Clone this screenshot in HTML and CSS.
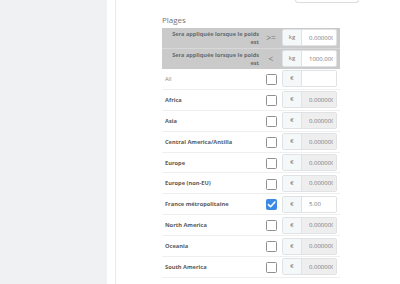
FILE: index.html
```html
<!DOCTYPE html>
<html lang="fr">
<head>
    <meta charset="UTF-8">
    <title>Plages</title>
    <link rel="stylesheet" href="styles.css">
</head>
<body>
    <div class="sidebar"></div>
    <div class="main">
        <div class="card">
            <div class="topbox"></div>
            <h3 class="section-title">Plages</h3>
            <div class="ranges">
                <div class="row head">
                    <div class="cond">Sera appliquée lorsque le poids est</div>
                    <div class="sign">&gt;=</div>
                    <div class="group"><span class="addon">kg</span><input class="val" value="0.000000"></div>
                </div>
                <div class="row head">
                    <div class="cond">Sera appliquée lorsque le poids est</div>
                    <div class="sign">&lt;</div>
                    <div class="group"><span class="addon">kg</span><input class="val" value="1000.000000"></div>
                </div>
                <div class="row zone">
                    <div class="name all">All</div>
                    <div class="sign"><span class="check"></span></div>
                    <div class="group"><span class="addon">€</span><input class="val" value=""></div>
                </div>
                <div class="row zone">
                    <div class="name">Africa</div>
                    <div class="sign"><span class="check"></span></div>
                    <div class="group"><span class="addon">€</span><input class="val" value="0.000000" disabled></div>
                </div>
                <div class="row zone">
                    <div class="name">Asia</div>
                    <div class="sign"><span class="check"></span></div>
                    <div class="group"><span class="addon">€</span><input class="val" value="0.000000" disabled></div>
                </div>
                <div class="row zone">
                    <div class="name">Central America/Antilla</div>
                    <div class="sign"><span class="check"></span></div>
                    <div class="group"><span class="addon">€</span><input class="val" value="0.000000" disabled></div>
                </div>
                <div class="row zone">
                    <div class="name">Europe</div>
                    <div class="sign"><span class="check"></span></div>
                    <div class="group"><span class="addon">€</span><input class="val" value="0.000000" disabled></div>
                </div>
                <div class="row zone">
                    <div class="name">Europe (non-EU)</div>
                    <div class="sign"><span class="check"></span></div>
                    <div class="group"><span class="addon">€</span><input class="val" value="0.000000" disabled></div>
                </div>
                <div class="row zone">
                    <div class="name">France métropolitaine</div>
                    <div class="sign">
                        <span class="check on">
                            <svg viewBox="0 0 12 12" width="11" height="11"><path d="M2.6 6.2 L5 8.5 L9.6 3.4" fill="none" stroke="#fff" stroke-width="1.7" stroke-linecap="round" stroke-linejoin="round"/></svg>
                        </span>
                    </div>
                    <div class="group"><span class="addon">€</span><input class="val" value="5.00"></div>
                </div>
                <div class="row zone">
                    <div class="name">North America</div>
                    <div class="sign"><span class="check"></span></div>
                    <div class="group"><span class="addon">€</span><input class="val" value="0.000000" disabled></div>
                </div>
                <div class="row zone">
                    <div class="name">Oceania</div>
                    <div class="sign"><span class="check"></span></div>
                    <div class="group"><span class="addon">€</span><input class="val" value="0.000000" disabled></div>
                </div>
                <div class="row zone">
                    <div class="name">South America</div>
                    <div class="sign"><span class="check"></span></div>
                    <div class="group"><span class="addon">€</span><input class="val" value="0.000000" disabled></div>
                </div>
            </div>
        </div>
    </div>
</body>
</html>
```
FILE: styles.css
```css
body {margin: 0; height: 284px; overflow: hidden; display: flex; font-family: "Open Sans", sans-serif; color: #555555; background: #ffffff}
.sidebar {width: 107px; flex: none; background: #eff1f3}
.main {flex: 1; padding-left: 8px}
.card {height: 100%; border-left: 1px solid #e8eaec; padding-left: 46px}
.topbox {margin-left: 133px; width: 62px; height: 2px; border: 1px solid #dddddd; border-top: none; border-radius: 0 0 3px 3px}
.section-title {margin: 12px 0 3px; font-size: 8px; font-weight: normal; color: #747474; line-height: 10px}
.ranges {width: 178px}
.row {display: grid; grid-template-columns: 98px 20px 55px; column-gap: 1px; align-items: center; box-sizing: border-box}
.row.head {height: 20.5px; background: #cacaca; border-bottom: 1px solid #d8d8d8}
.row.head:nth-child(2) {border-bottom: none}
.row.zone {height: 20.9px; border-bottom: 1px solid #efefef}
.cond {text-align: right; font-size: 5.6px; font-weight: bold; line-height: 8px; color: #6a6a6a; padding: 0 1px 0 8px}
.sign {text-align: center; font-size: 8.5px; color: #7a7a7a}
.name {padding-left: 3px; font-size: 5.7px; font-weight: bold; color: #5a5a5a}
.name.all {font-weight: normal; color: #8a8a8a}
.check {display: inline-block; width: 11px; height: 11px; box-sizing: border-box; border: 1px solid #8f8f8f; border-radius: 1.5px; background: #fff; vertical-align: middle}
.check.on {background: #3b8ae6; border-color: #3b8ae6; position: relative}
.check.on svg {position: absolute; left: -1px; top: -1px}
.group {display: flex; height: 17px; border: 1px solid #dfe3e6; border-radius: 2px; box-sizing: border-box; overflow: hidden}
.addon {width: 18px; flex: none; background: #f5f8f9; border-right: 1px solid #dfe3e6; font-size: 6px; color: #777777; text-align: center; line-height: 15px}
.val {flex: 1; min-width: 0; width: 0; border: none; padding: 0 3px 0 7px; margin: 0; font-family: "Open Sans", sans-serif; font-size: 6px; color: #777777; background: #ffffff; outline: none}
.val:disabled {background: #eeeeee; color: #777777}
```
